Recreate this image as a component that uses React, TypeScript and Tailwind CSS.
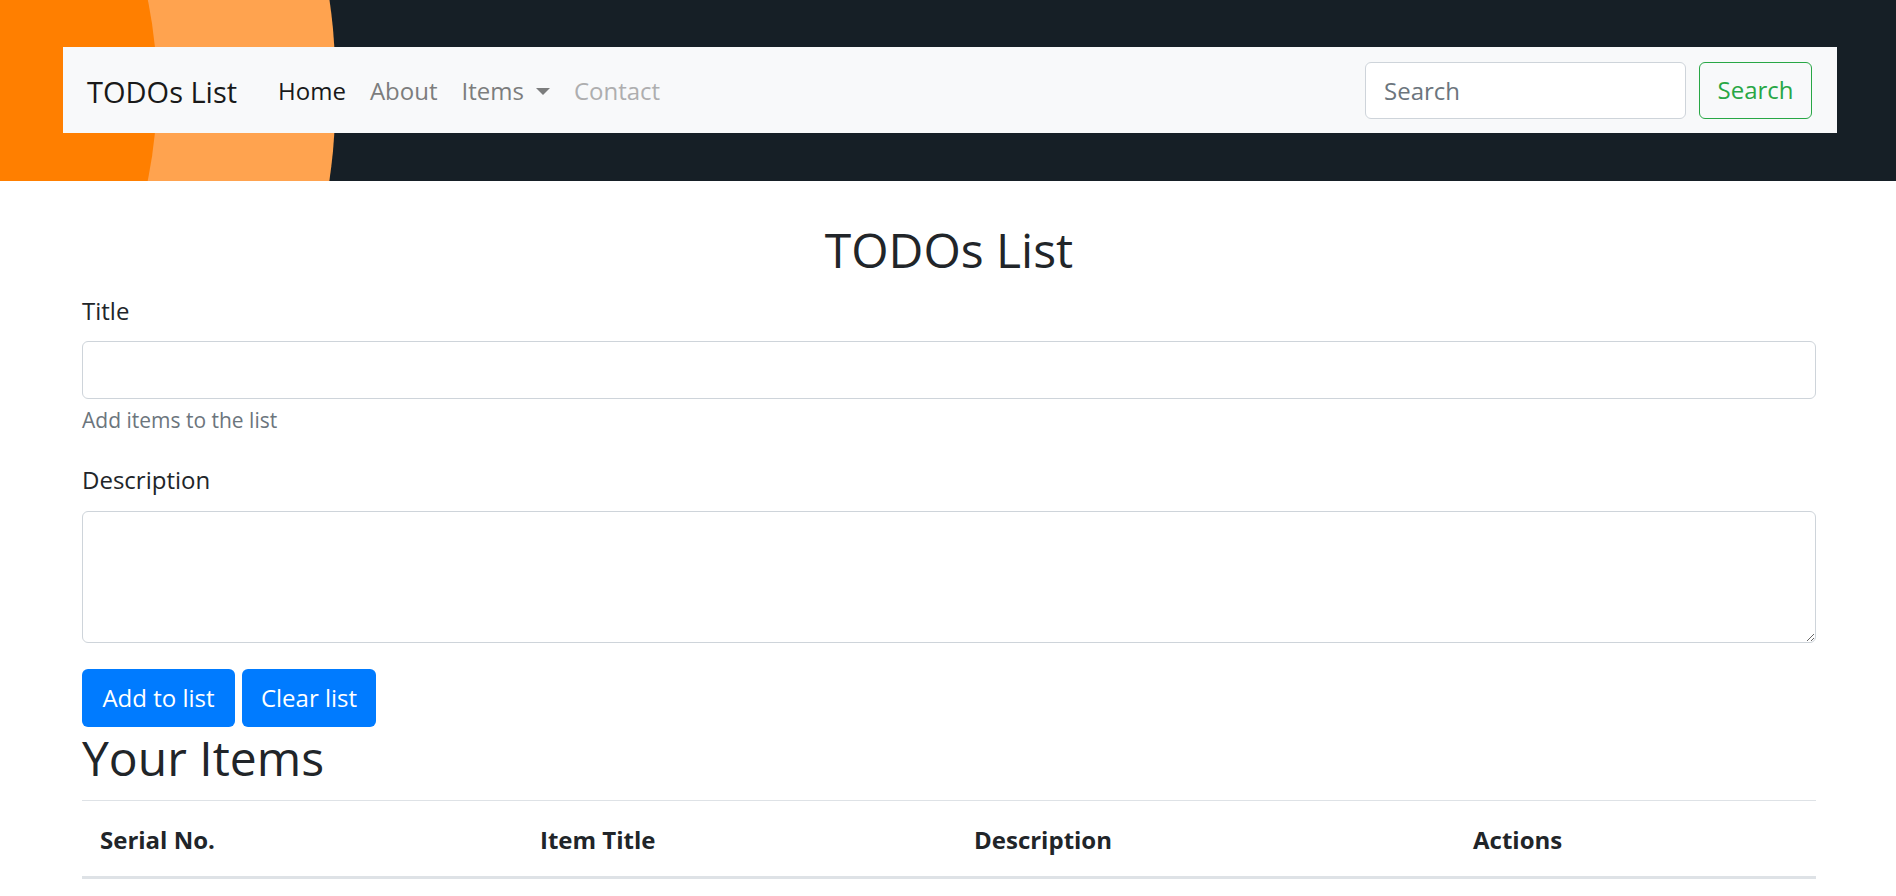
import React from 'react';

const navLinks = [
  { label: 'Home', color: 'text-[#191919]' },
  { label: 'About', color: 'text-[#7c7d7d]' },
  { label: 'Items', color: 'text-[#7c7d7d]', dropdown: true },
  { label: 'Contact', color: 'text-[#aeaeaf]' },
];

const columns = [
  { label: 'Serial No.', width: 'w-[440px]' },
  { label: 'Item Title', width: 'w-[434px]' },
  { label: 'Description', width: 'w-[499px]' },
  { label: 'Actions', width: '' },
];

const Header = () => {
  return (
    <header className="relative overflow-hidden bg-[#161f26] pt-[47px] pb-[48px] pl-[63px] pr-[59px]">
      {/* orange arcs on the left */}
      <svg className="absolute inset-0 h-full w-full" aria-hidden="true">
        <circle cx="-290" cy="90" r="626" fill="#ffa34f" />
        <circle cx="-290" cy="90" r="447" fill="#ff7f00" />
      </svg>

      <nav className="relative flex h-[86px] items-center bg-[#f8f9fa] pl-[24px] pr-[25px]">
        <a href="#" className="mt-[2px] mr-[29px] text-[29px] leading-[45px] text-[#191919]">
          TODOs List
        </a>
        <ul className="mt-[2px] flex items-center">
          {navLinks.map((link) => (
            <li key={link.label}>
              <a href="#" className={`flex items-center px-[12px] text-[24px] leading-[36px] ${link.color}`}>
                {link.label}
                {link.dropdown && (
                  <span className="ml-[12px] inline-block h-0 w-0 border-x-[7px] border-t-[7px] border-x-transparent border-t-[#7c7d7d]" />
                )}
              </a>
            </li>
          ))}
        </ul>

        <form className="ml-auto flex items-center" onSubmit={(e) => e.preventDefault()}>
          <input
            type="search"
            placeholder="Search"
            className="mr-[13px] h-[57px] w-[321px] rounded-[6px] border border-[#ced4da] bg-white px-[18px] text-[24px] text-[#495057] outline-none placeholder:text-[#6c757d]"
          />
          <button
            type="submit"
            className="h-[57px] w-[113px] rounded-[6px] border border-[#28a745] text-[24px] text-[#28a745]"
          >
            Search
          </button>
        </form>
      </nav>
    </header>
  );
};

const App = () => {
  return (
    <div className="min-h-screen bg-white font-['Open_Sans',sans-serif] text-[#212529]">
      <Header />

      <main className="pl-[82px] pr-[80px]">
        <h2 className="mt-[40px] mb-[14px] text-center text-[48px] leading-[58px] font-medium">TODOs List</h2>

        <form onSubmit={(e) => e.preventDefault()}>
          <label className="mb-[12px] block text-[24px] leading-[36px]">Title</label>
          <input
            type="text"
            className="block h-[58px] w-full rounded-[6px] border border-[#ced4da] px-[18px] text-[24px] outline-none"
          />
          <small className="mt-[6px] block text-[21px] leading-[31px] text-[#6c757d]">Add items to the list</small>

          <label className="mt-[26px] mb-[13px] block text-[24px] leading-[36px]">Description</label>
          <textarea
            rows={3}
            className="block h-[132px] w-full rounded-[6px] border border-[#ced4da] px-[18px] py-[9px] text-[24px] outline-none"
          />

          <div className="mt-[26px] flex gap-[7px]">
            <button type="submit" className="h-[58px] w-[153px] rounded-[6px] bg-[#007bff] text-[24px] text-white">
              Add to list
            </button>
            <button type="button" className="h-[58px] w-[134px] rounded-[6px] bg-[#007bff] text-[24px] text-white">
              Clear list
            </button>
          </div>
        </form>

        <h2 className="mt-[2px] mb-[13px] text-[48px] leading-[58px] font-medium">Your Items</h2>

        <table className="w-full table-fixed border-collapse">
          <thead>
            <tr>
              {columns.map((col) => (
                <th
                  key={col.label}
                  className={`${col.width} border-t border-b-[3px] border-t-[#dee2e6] border-b-[#dee2e6] px-[18px] pt-[21px] pb-[18px] text-left text-[24px] leading-[36px] font-bold`}
                >
                  {col.label}
                </th>
              ))}
            </tr>
          </thead>
          <tbody></tbody>
        </table>
      </main>
    </div>
  );
};

export default App;
